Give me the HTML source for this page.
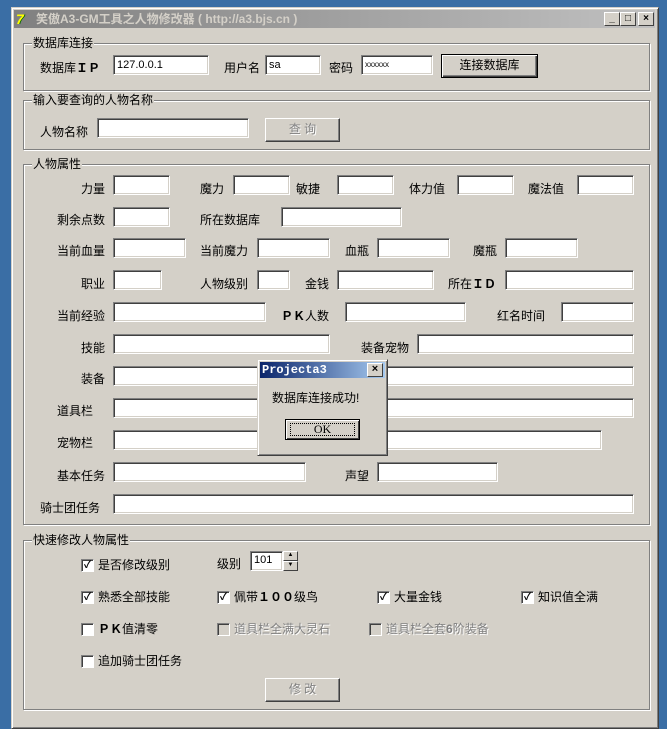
<!DOCTYPE html>
<html><head><meta charset="utf-8"><style>
*{margin:0;padding:0;box-sizing:border-box}
body{width:667px;height:727px;background:#3a6ea5;position:relative;overflow:hidden;font:12px "Liberation Sans","Noto Sans CJK SC",sans-serif;color:#000}
.a{position:absolute;white-space:nowrap}
.win{position:absolute;left:11px;top:7px;width:648px;height:722px;background:#d4d0c8;border:1px solid;border-color:#d4d0c8 #404040 #404040 #d4d0c8;box-shadow:inset 1px 1px #fff,inset -1px -1px #808080}
.tb{position:absolute;left:14px;top:10px;width:641px;height:18px;background:linear-gradient(90deg,#808080,#c0c0c0)}
.tt{position:absolute;left:22px;top:1px;color:#d4d0c8;font-weight:bold;font-size:12px;line-height:16px}
.tbtn{position:absolute;top:2px;width:16px;height:14px;background:#d4d0c8;border:1px solid;border-color:#fff #404040 #404040 #fff;font-size:10px;line-height:11px;text-align:center;font-weight:bold}
.grp{position:absolute;border:1px solid #808080;box-shadow:1px 1px #fff,inset 1px 1px #fff}
.gl{position:absolute;top:-8px;left:8px;background:#d4d0c8;padding:0 1px;line-height:14px}
.i{position:absolute;height:20px;background:#fff;border:1px solid;border-color:#808080 #fff #fff #808080;box-shadow:inset 1px 1px #404040,inset -1px -1px #d4d0c8;font-size:11px;padding:2px 3px;line-height:14px}
.l{position:absolute;line-height:14px}
.b{position:absolute;height:24px;background:#d4d0c8;border:1px solid;border-color:#fff #404040 #404040 #fff;box-shadow:inset -1px -1px #808080;text-align:center;line-height:21px}
.dis{color:#808080;text-shadow:1px 1px #fff}
.cb{position:absolute;width:13px;height:13px;background:#fff;border:1px solid;border-color:#808080 #fff #fff #808080;box-shadow:inset 1px 1px #404040;font-size:10px;line-height:11px;text-align:center;font-weight:bold}
.cb.d{background:#d4d0c8}
</style></head><body>
<div class="win"></div>
<div class="tb"><div class="a" style="left:2px;top:1px;width:16px;height:16px;color:#ff0;font-weight:bold;font-style:italic;font-size:14px;line-height:16px;text-shadow:1px 0 #060">7</div><div class="tt">笑傲A3-GM工具之人物修改器 ( http://a3.bjs.cn )</div>
<div class="tbtn" style="left:590px">_</div><div class="tbtn" style="left:606px">□</div><div class="tbtn" style="left:624px">×</div></div>

<div class="grp" style="left:23px;top:43px;width:627px;height:48px"><div class="gl">数据库连接</div></div>
<div class="l" style="left:40px;top:61px">数据库<b>ＩＰ</b></div>
<div class="i" style="left:113px;top:55px;width:96px">127.0.0.1</div>
<div class="l" style="left:224px;top:61px">用户名</div>
<div class="i" style="left:265px;top:55px;width:56px">sa</div>
<div class="l" style="left:329px;top:61px">密码</div>
<div class="i" style="left:361px;top:55px;width:72px;font-size:8px">xxxxxx</div>
<div class="b" style="left:441px;top:54px;width:97px;border:1px solid #000;box-shadow:inset 1px 1px #fff,inset -1px -1px #404040,inset -2px -2px #808080">连接数据库</div>

<div class="grp" style="left:23px;top:100px;width:627px;height:50px"><div class="gl">输入要查询的人物名称</div></div>
<div class="l" style="left:40px;top:125px">人物名称</div>
<div class="i" style="left:97px;top:118px;width:152px"></div>
<div class="b dis" style="left:265px;top:118px;width:75px">查 询</div>

<div class="grp" style="left:23px;top:164px;width:627px;height:361px"><div class="gl">人物属性</div></div>
<div class="l" style="left:81px;top:182px">力量</div><div class="i" style="left:113px;top:175px;width:57px"></div>
<div class="l" style="left:200px;top:182px">魔力</div><div class="i" style="left:233px;top:175px;width:57px"></div>
<div class="l" style="left:296px;top:182px">敏捷</div><div class="i" style="left:337px;top:175px;width:57px"></div>
<div class="l" style="left:409px;top:182px">体力值</div><div class="i" style="left:457px;top:175px;width:57px"></div>
<div class="l" style="left:528px;top:182px">魔法值</div><div class="i" style="left:577px;top:175px;width:57px"></div>

<div class="l" style="left:57px;top:213px">剩余点数</div><div class="i" style="left:113px;top:207px;width:57px"></div>
<div class="l" style="left:200px;top:213px">所在数据库</div><div class="i" style="left:281px;top:207px;width:121px"></div>

<div class="l" style="left:57px;top:244px">当前血量</div><div class="i" style="left:113px;top:238px;width:73px"></div>
<div class="l" style="left:200px;top:244px">当前魔力</div><div class="i" style="left:257px;top:238px;width:73px"></div>
<div class="l" style="left:345px;top:244px">血瓶</div><div class="i" style="left:377px;top:238px;width:73px"></div>
<div class="l" style="left:473px;top:244px">魔瓶</div><div class="i" style="left:505px;top:238px;width:73px"></div>

<div class="l" style="left:81px;top:277px">职业</div><div class="i" style="left:113px;top:270px;width:49px"></div>
<div class="l" style="left:200px;top:277px">人物级别</div><div class="i" style="left:257px;top:270px;width:33px"></div>
<div class="l" style="left:305px;top:277px">金钱</div><div class="i" style="left:337px;top:270px;width:97px"></div>
<div class="l" style="left:448px;top:277px">所在<b>ＩＤ</b></div><div class="i" style="left:505px;top:270px;width:129px"></div>

<div class="l" style="left:57px;top:309px">当前经验</div><div class="i" style="left:113px;top:302px;width:153px"></div>
<div class="l" style="left:281px;top:309px"><b>ＰＫ</b>人数</div><div class="i" style="left:345px;top:302px;width:121px"></div>
<div class="l" style="left:497px;top:309px">红名时间</div><div class="i" style="left:561px;top:302px;width:73px"></div>

<div class="l" style="left:81px;top:341px">技能</div><div class="i" style="left:113px;top:334px;width:217px"></div>
<div class="l" style="left:361px;top:341px">装备宠物</div><div class="i" style="left:417px;top:334px;width:217px"></div>

<div class="l" style="left:81px;top:372px">装备</div><div class="i" style="left:113px;top:366px;width:521px"></div>
<div class="l" style="left:57px;top:404px">道具栏</div><div class="i" style="left:113px;top:398px;width:521px"></div>
<div class="l" style="left:57px;top:436px">宠物栏</div><div class="i" style="left:113px;top:430px;width:489px"></div>
<div class="l" style="left:57px;top:469px">基本任务</div><div class="i" style="left:113px;top:462px;width:193px"></div>
<div class="l" style="left:345px;top:469px">声望</div><div class="i" style="left:377px;top:462px;width:121px"></div>
<div class="l" style="left:40px;top:501px">骑士团任务</div><div class="i" style="left:113px;top:494px;width:521px"></div>

<div class="grp" style="left:23px;top:540px;width:627px;height:170px"><div class="gl">快速修改人物属性</div></div>
<div class="cb" style="left:81px;top:559px">✓</div><div class="l" style="left:98px;top:558px">是否修改级别</div>
<div class="l" style="left:217px;top:557px">级别</div>
<div class="i" style="left:250px;top:551px;width:33px;padding-top:1px">101</div>
<div class="a" style="left:283px;top:551px;width:15px;height:10px;background:#d4d0c8;border:1px solid;border-color:#fff #404040 #404040 #fff;font-size:6px;line-height:7px;text-align:center">▲</div>
<div class="a" style="left:283px;top:561px;width:15px;height:10px;background:#d4d0c8;border:1px solid;border-color:#fff #404040 #404040 #fff;font-size:6px;line-height:7px;text-align:center">▼</div>

<div class="cb" style="left:81px;top:591px">✓</div><div class="l" style="left:98px;top:590px">熟悉全部技能</div>
<div class="cb" style="left:217px;top:591px">✓</div><div class="l" style="left:234px;top:590px">佩带<b>１００</b>级鸟</div>
<div class="cb" style="left:377px;top:591px">✓</div><div class="l" style="left:394px;top:590px">大量金钱</div>
<div class="cb" style="left:521px;top:591px">✓</div><div class="l" style="left:538px;top:590px">知识值全满</div>

<div class="cb" style="left:81px;top:623px"></div><div class="l" style="left:98px;top:622px"><b>ＰＫ</b>值清零</div>
<div class="cb d" style="left:217px;top:623px"></div><div class="l dis" style="left:234px;top:622px">道具栏全满大灵石</div>
<div class="cb d" style="left:369px;top:623px"></div><div class="l dis" style="left:386px;top:622px">道具栏全套<b>6</b>阶装备</div>

<div class="cb" style="left:81px;top:655px"></div><div class="l" style="left:98px;top:654px">追加骑士团任务</div>
<div class="b dis" style="left:265px;top:678px;width:75px">修 改</div>

<!-- dialog -->
<div class="a" style="left:257px;top:359px;width:131px;height:97px;background:#d4d0c8;border:1px solid;border-color:#d4d0c8 #404040 #404040 #d4d0c8;box-shadow:inset 1px 1px #fff,inset -1px -1px #808080"></div>
<div class="a" style="left:260px;top:362px;width:125px;height:16px;background:linear-gradient(90deg,#0a246a,#a6caf0)"></div>
<div class="a" style="left:262px;top:363px;color:#fff;font:bold 12px 'Liberation Mono',monospace;line-height:14px">Projecta3</div>
<div class="a" style="left:367px;top:363px;width:16px;height:14px;background:#d4d0c8;border:1px solid;border-color:#fff #404040 #404040 #fff;font-size:11px;line-height:11px;text-align:center;font-weight:bold">×</div>
<div class="l" style="left:272px;top:391px">数据库连接成功!</div>
<div class="a" style="left:285px;top:419px;width:75px;height:21px;background:#d4d0c8;border:1px solid #000;box-shadow:inset 1px 1px #fff,inset -1px -1px #404040;text-align:center;line-height:19px;font-family:'Liberation Serif',serif"><span style="position:absolute;left:4px;top:3px;right:4px;bottom:3px;border:1px dotted #000"></span>OK</div>
</body></html>
